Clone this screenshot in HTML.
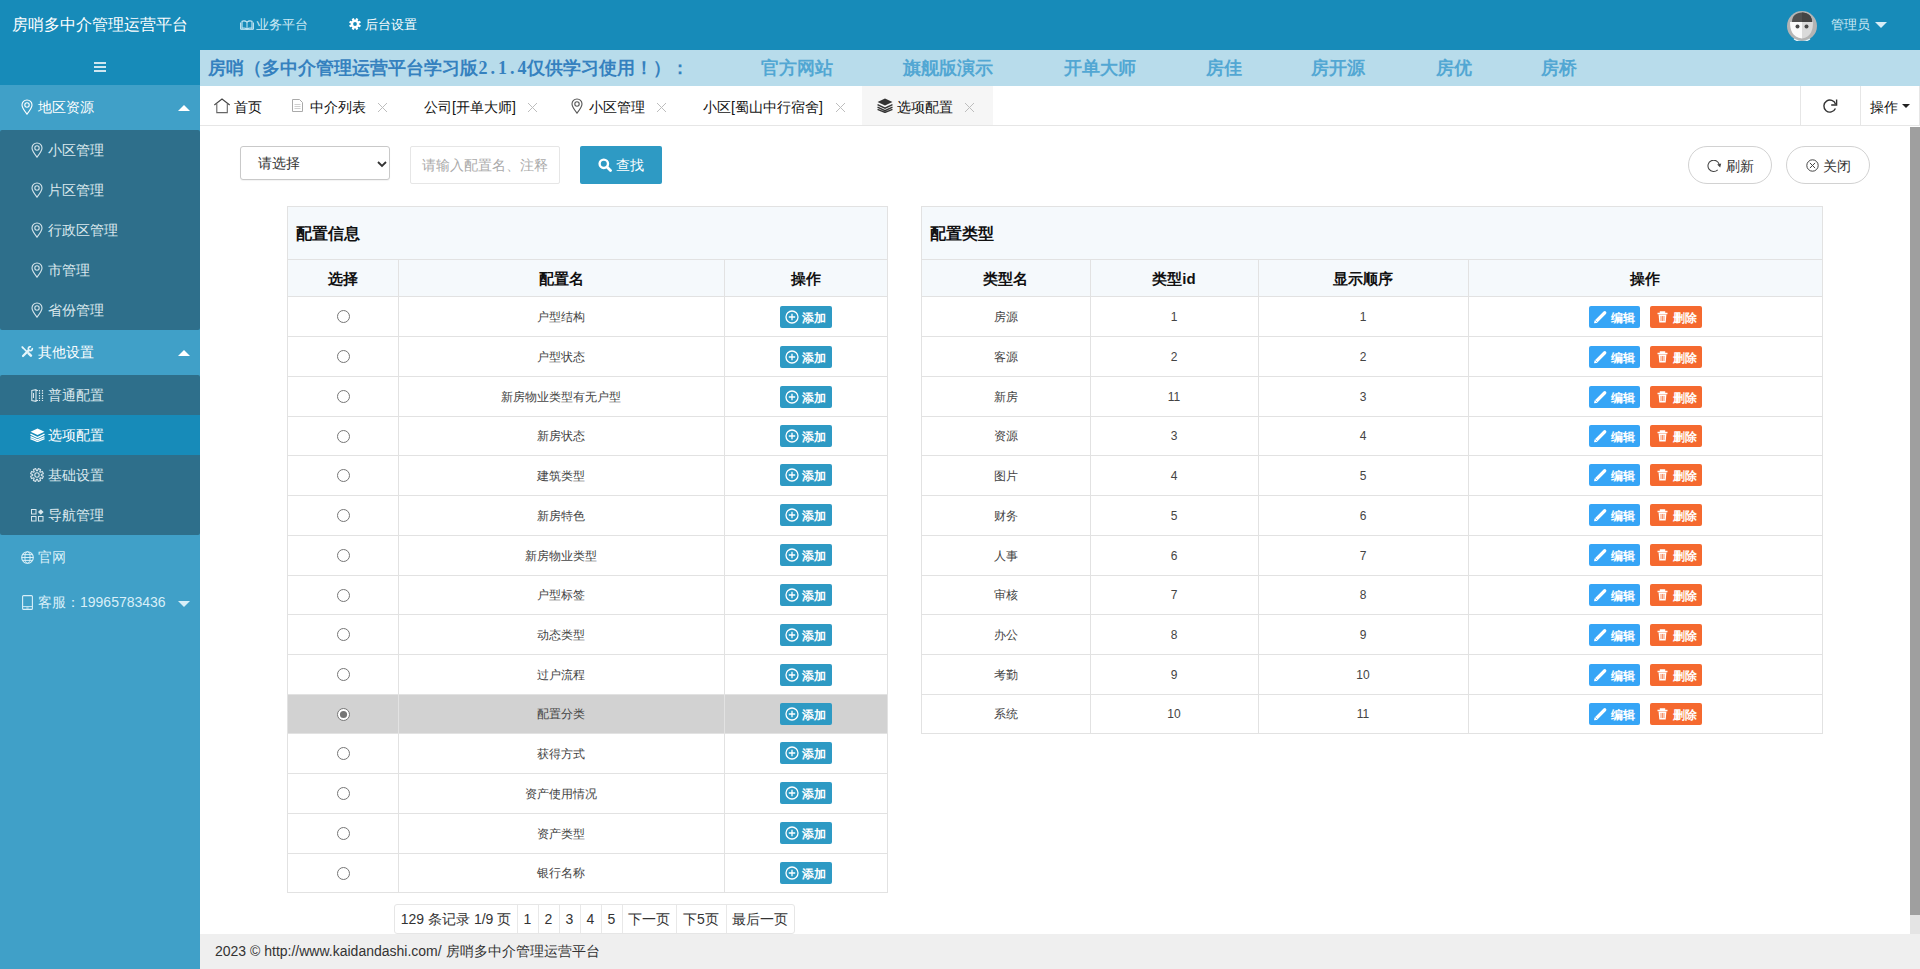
<!DOCTYPE html>
<html><head><meta charset="utf-8">
<style>
*{box-sizing:border-box;margin:0;padding:0}
html,body{width:1920px;height:969px;overflow:hidden;background:#fff;font-family:"Liberation Sans",sans-serif;color:#333}
.abs{position:absolute}
#hdr{position:absolute;left:0;top:0;width:1920px;height:50px;background:#178bb9}
#logo{position:absolute;left:12px;top:0;line-height:50px;font-size:16px;color:#fff;white-space:nowrap}
.hnav{position:absolute;top:0;line-height:50px;font-size:13px;color:#cdeaf5;white-space:nowrap}
#side{position:absolute;left:0;top:50px;width:200px;height:919px;background:#40a0c8}
#ham{position:absolute;left:0;top:0;width:200px;height:35px;background:#178bb9}
.m1{position:absolute;left:0;width:200px;height:45px;line-height:45px;font-size:14px;color:#fff;white-space:nowrap}
.m1 .tx{position:absolute;left:38px}
.sub{position:absolute;left:0;width:200px;background:#2e6f8b;border-radius:2px}
.m2{position:absolute;left:0;width:200px;height:40px;line-height:40px;font-size:14px;color:#dce9ee;white-space:nowrap}
.m2 .tx{position:absolute;left:48px}
.m2.on{background:#178bb9;color:#fff}
.ico{position:absolute}
.tri-up{position:absolute;width:0;height:0;border-left:6px solid transparent;border-right:6px solid transparent;border-bottom:6px solid #fff}
.tri-dn{position:absolute;width:0;height:0;border-left:6px solid transparent;border-right:6px solid transparent;border-top:6px solid #fff}
#banner{position:absolute;left:200px;top:50px;width:1720px;height:36px;background:#b8dceb;font-family:"Liberation Serif",serif;font-weight:bold;font-size:18px;line-height:36px;white-space:nowrap}
#banner span{position:absolute;top:0}
.hw{display:inline-block;width:9.8px;text-align:center}
#tabs{position:absolute;left:200px;top:86px;width:1720px;height:40px;background:#fff;border-bottom:1px solid #e6e6e6}
.tab{position:absolute;top:0;height:39px;line-height:42px;font-size:14px;color:#111;white-space:nowrap}
.tab span{position:absolute;top:0}
.cls{position:absolute;top:16px;width:11px;height:11px}
#main{position:absolute;left:0;top:0;width:1920px;height:969px}
.sel{position:absolute;border:1px solid #c9c9c9;border-radius:3px;background:#fff;font-size:14px;color:#333;box-shadow:0 1px 1px rgba(0,0,0,.05)}
.sel span,.inp span,.btnq span,.pill span,.badd span,.bed span,.bdel span{position:absolute;top:0;white-space:nowrap}
.sel span{line-height:32px}
.inp{position:absolute;border:1px solid #e6e6e6;border-radius:2px;background:#fff;font-size:14px;color:#aaa}
.inp span{line-height:36px}
.btnq{position:absolute;background:#2e9ac4;border-radius:2px;color:#fff;font-size:14px}
.btnq span{line-height:38px}
.pill{position:absolute;border:1px solid #d2d2d2;border-radius:19px;background:#fff;color:#333;font-size:14px}
.pill span{line-height:38px}
.pnl{position:absolute;border:1px solid #e2e2e2;background:#fff}
.phd{position:absolute;background:#f5f9fc}
.ptl{position:absolute;font-size:16px;font-weight:bold;line-height:53px;color:#111;white-space:nowrap}
.hl{position:absolute;height:1px;background:#e2e2e2}
.vl{position:absolute;width:1px;background:#e2e2e2}
.th{position:absolute;height:36px;line-height:37px;text-align:center;font-size:15px;font-weight:bold;color:#111}
.td{position:absolute;text-align:center;font-size:12px;color:#444;white-space:nowrap}
.badd,.bed,.bdel{position:absolute;width:52px;height:22px;border-radius:2px;color:#fff;font-size:12px;font-weight:bold}
.badd span,.bed span,.bdel span{line-height:24px}
.badd{background:#2e9ac4}
.bed{background:#36a5f6;width:51px}
.bdel{background:#f5692f}
.pg{position:absolute;height:28px;line-height:28px;text-align:center;font-size:14px;color:#333;white-space:nowrap}
#footer{position:absolute;left:200px;top:934px;width:1720px;height:35px;background:#efefef;line-height:34px;font-size:14px;color:#333;padding-left:15px;white-space:nowrap}
#sb{position:absolute;left:1910px;top:127px;width:10px;height:807px;background:#e4e4e4}
#sbt{position:absolute;left:1910px;top:127px;width:10px;height:788px;background:#9f9f9f}
</style></head><body>
<div id="hdr">
  <div id="logo">房哨多中介管理运营平台</div>
  <svg class="ico" style="left:240px;top:20px" width="14" height="10" viewBox="0 0 14 10"><path d="M2 1.3C3.6 0.6 5.5 0.8 7 2.2C8.5 0.8 10.4 0.6 12 1.3V8.3C10.4 7.7 8.5 7.9 7 9.2C5.5 7.9 3.6 7.7 2 8.3Z" fill="none" stroke="#cdeaf5" stroke-width="1.1"/><path d="M7 2.2V9M0.6 2.5V9.3H13.4V2.5" fill="none" stroke="#cdeaf5" stroke-width="1"/></svg>
  <div class="hnav" style="left:256px">业务平台</div>
  <svg class="ico" style="left:349px;top:18px" width="12" height="12" viewBox="0 0 12 12"><path d="M10.18 6.41L11.88 7.17L10.99 9.33L9.25 8.66L8.66 9.25L9.33 10.99L7.17 11.88L6.41 10.18L5.59 10.18L4.83 11.88L2.67 10.99L3.34 9.25L2.75 8.66L1.01 9.33L0.12 7.17L1.82 6.41L1.82 5.59L0.12 4.83L1.01 2.67L2.75 3.34L3.34 2.75L2.67 1.01L4.83 0.12L5.59 1.82L6.41 1.82L7.17 0.12L9.33 1.01L8.66 2.75L9.25 3.34L10.99 2.67L11.88 4.83L10.18 5.59Z" fill="#fff"/><circle cx="6" cy="6" r="1.9" fill="#178bb9"/></svg>
  <div class="hnav" style="left:365px;color:#fff">后台设置</div>
  <svg class="ico" style="left:1787px;top:11px" width="30" height="30" viewBox="0 0 30 30"><circle cx="15" cy="15" r="15" fill="#b4b4b4"/><path d="M3 11C3 19 5 26 15 27.5V11Z" fill="#fafafa"/><path d="M15 11H26C26 19 24 26 15 27.5Z" fill="#dadada"/><path d="M5 11C5 5 9 1.5 15 1.5C21 1.5 25 5 25 11Z" fill="#505050"/><path d="M15 1.5V11H25C25 5 21 1.5 15 1.5Z" fill="#444"/><circle cx="10.5" cy="15.5" r="2" fill="#4a4a4a"/><circle cx="19.5" cy="15.5" r="2" fill="#4a4a4a"/><path d="M7 28A15 15 0 0 0 23 28" stroke="#e8f4f8" stroke-width="1.2" fill="none"/></svg>
  <div class="hnav" style="left:1831px">管理员</div>
  <div class="tri-dn" style="left:1875px;top:22px;border-top-color:#d8eef7"></div>
</div>
<div id="side">
  <div id="ham"><svg class="ico" style="left:94px;top:11px" width="12" height="12" viewBox="0 0 12 12"><rect x="0" y="1" width="12" height="2" fill="#cfe6f0"/><rect x="0" y="5" width="12" height="2" fill="#cfe6f0"/><rect x="0" y="9" width="12" height="2" fill="#cfe6f0"/></svg></div>
  <div class="m1" style="top:35px"><svg class="ico" style="left:21px;top:14px" width="12" height="16" viewBox="0 0 12 16"><path d="M6 15.2C3.2 11.6 1 8.6 1 6A5 5 0 0 1 11 6C11 8.6 8.8 11.6 6 15.2Z" fill="none" stroke="#fff" stroke-width="1.1"/><circle cx="6" cy="6" r="2.2" fill="none" stroke="#fff" stroke-width="1.1"/></svg><span class="tx">地区资源</span><div class="tri-up" style="left:178px;top:20px"></div></div>
  <div class="sub" style="top:80px;height:200px">
    <div class="m2" style="top:0"><svg class="ico" style="left:31px;top:12px" width="12" height="16" viewBox="0 0 12 16"><path d="M6 15.2C3.2 11.6 1 8.6 1 6A5 5 0 0 1 11 6C11 8.6 8.8 11.6 6 15.2Z" fill="none" stroke="#d8e6ec" stroke-width="1.1"/><circle cx="6" cy="6" r="2.2" fill="none" stroke="#d8e6ec" stroke-width="1.1"/></svg><span class="tx">小区管理</span></div>
    <div class="m2" style="top:40px"><svg class="ico" style="left:31px;top:12px" width="12" height="16" viewBox="0 0 12 16"><path d="M6 15.2C3.2 11.6 1 8.6 1 6A5 5 0 0 1 11 6C11 8.6 8.8 11.6 6 15.2Z" fill="none" stroke="#d8e6ec" stroke-width="1.1"/><circle cx="6" cy="6" r="2.2" fill="none" stroke="#d8e6ec" stroke-width="1.1"/></svg><span class="tx">片区管理</span></div>
    <div class="m2" style="top:80px"><svg class="ico" style="left:31px;top:12px" width="12" height="16" viewBox="0 0 12 16"><path d="M6 15.2C3.2 11.6 1 8.6 1 6A5 5 0 0 1 11 6C11 8.6 8.8 11.6 6 15.2Z" fill="none" stroke="#d8e6ec" stroke-width="1.1"/><circle cx="6" cy="6" r="2.2" fill="none" stroke="#d8e6ec" stroke-width="1.1"/></svg><span class="tx">行政区管理</span></div>
    <div class="m2" style="top:120px"><svg class="ico" style="left:31px;top:12px" width="12" height="16" viewBox="0 0 12 16"><path d="M6 15.2C3.2 11.6 1 8.6 1 6A5 5 0 0 1 11 6C11 8.6 8.8 11.6 6 15.2Z" fill="none" stroke="#d8e6ec" stroke-width="1.1"/><circle cx="6" cy="6" r="2.2" fill="none" stroke="#d8e6ec" stroke-width="1.1"/></svg><span class="tx">市管理</span></div>
    <div class="m2" style="top:160px"><svg class="ico" style="left:31px;top:12px" width="12" height="16" viewBox="0 0 12 16"><path d="M6 15.2C3.2 11.6 1 8.6 1 6A5 5 0 0 1 11 6C11 8.6 8.8 11.6 6 15.2Z" fill="none" stroke="#d8e6ec" stroke-width="1.1"/><circle cx="6" cy="6" r="2.2" fill="none" stroke="#d8e6ec" stroke-width="1.1"/></svg><span class="tx">省份管理</span></div>
  </div>
  <div class="m1" style="top:280px"><svg class="ico" style="left:21px;top:16px" width="13" height="12" viewBox="0 0 13 12"><path d="M1.3 1.1L5.6 5.4" stroke="#e6f6fb" stroke-width="1.5" stroke-linecap="round"/><path d="M0.6 0.5L2.9 1L1.1 2.8Z" fill="#e6f6fb"/><path d="M7.6 7.4L9.9 9.7" stroke="#e6f6fb" stroke-width="2.6" stroke-linecap="round"/><path d="M2 10L7.6 4.4" stroke="#e6f6fb" stroke-width="2.2" stroke-linecap="round"/><path d="M11.2 2A2 2 0 1 1 10 0.8" fill="none" stroke="#e6f6fb" stroke-width="1.6"/></svg><span class="tx">其他设置</span><div class="tri-up" style="left:178px;top:20px"></div></div>
  <div class="sub" style="top:325px;height:160px">
    <div class="m2" style="top:0"><svg class="ico" style="left:31px;top:14px" width="13" height="13" viewBox="0 0 13 13"><path d="M0.8 1.5L5 0.6V12.4L0.8 11.5Z" fill="none" stroke="#d8e6ec" stroke-width="1.1"/><path d="M5 1.5H7M5 11.5H7M2.5 4V9" stroke="#d8e6ec" stroke-width="1"/><path d="M8.5 1V12M11.5 1V12" stroke="#d8e6ec" stroke-width="1.2" stroke-dasharray="1.5 1"/></svg><span class="tx">普通配置</span></div>
    <div class="m2 on" style="top:40px"><svg class="ico" style="left:30px;top:13px" width="15" height="14" viewBox="0 0 15 14"><path d="M7.5 0.5L14.5 3.8L7.5 7.1L0.5 3.8Z" fill="#fff"/><path d="M0.5 6.2L7.5 9.5L14.5 6.2M0.5 8.6L7.5 11.9L14.5 8.6M0.5 10.6L7.5 13.5L14.5 10.6" fill="none" stroke="#fff" stroke-width="1.3"/></svg><span class="tx">选项配置</span></div>
    <div class="m2" style="top:80px"><svg class="ico" style="left:30px;top:13px" width="14" height="14" viewBox="0 0 14 14"><path d="M11.28 7.42L13.38 8.27L12.40 10.61L10.32 9.73L9.73 10.32L10.61 12.40L8.27 13.38L7.42 11.28L6.58 11.28L5.73 13.38L3.39 12.40L4.27 10.32L3.68 9.73L1.60 10.61L0.62 8.27L2.72 7.42L2.72 6.58L0.62 5.73L1.60 3.39L3.68 4.27L4.27 3.68L3.39 1.60L5.73 0.62L6.58 2.72L7.42 2.72L8.27 0.62L10.61 1.60L9.73 3.68L10.32 4.27L12.40 3.39L13.38 5.73L11.28 6.58Z" fill="none" stroke="#d8e6ec" stroke-width="1.1" stroke-linejoin="round"/><circle cx="7" cy="7" r="2.2" fill="none" stroke="#d8e6ec" stroke-width="1.1"/></svg><span class="tx">基础设置</span></div>
    <div class="m2" style="top:120px"><svg class="ico" style="left:31px;top:14px" width="13" height="13" viewBox="0 0 13 13"><rect x="0.5" y="0.5" width="4.5" height="4.5" fill="none" stroke="#d8e6ec"/><rect x="0.5" y="7.5" width="4.5" height="4.5" fill="none" stroke="#d8e6ec"/><rect x="7.5" y="7.5" width="4.5" height="4.5" fill="none" stroke="#d8e6ec"/><path d="M9.8 0.2L12.6 3L9.8 5.8L7 3Z" fill="#d8e6ec"/></svg><span class="tx">导航管理</span></div>
  </div>
  <div class="m1" style="top:485px;color:#d8eff8"><svg class="ico" style="left:21px;top:16px" width="13" height="13" viewBox="0 0 13 13"><circle cx="6.5" cy="6.5" r="5.8" fill="none" stroke="#d8eff8" stroke-width="1.1"/><ellipse cx="6.5" cy="6.5" rx="2.6" ry="5.8" fill="none" stroke="#d8eff8" stroke-width="1"/><path d="M0.7 6.5H12.3M1.5 3.6H11.5M1.5 9.4H11.5" stroke="#d8eff8" stroke-width="1"/></svg><span class="tx">官网</span></div>
  <div class="m1" style="top:530px;color:#d8eff8"><svg class="ico" style="left:22px;top:15px" width="11" height="15" viewBox="0 0 11 15"><rect x="0.6" y="0.6" width="9.8" height="13.8" rx="1" fill="none" stroke="#d8eff8" stroke-width="1.1"/><path d="M0.6 11.6H10.4M4.3 13H6.7" stroke="#d8eff8" stroke-width="0.9"/></svg><span class="tx">客服：19965783436</span><div class="tri-dn" style="left:178px;top:21px;border-top-color:#d8eff8"></div></div>
</div>
<div id="banner">
  <span style="left:8px;color:#3581bf">房哨（多中介管理运营平台学习版<b class="hw">2</b><b class="hw">.</b><b class="hw">1</b><b class="hw">.</b><b class="hw">4</b>仅供学习使用！）：</span>
  <span style="left:561px;color:#52a7d3">官方网站</span>
  <span style="left:703px;color:#52a7d3">旗舰版演示</span>
  <span style="left:864px;color:#52a7d3">开单大师</span>
  <span style="left:1006px;color:#52a7d3">房佳</span>
  <span style="left:1111px;color:#52a7d3">房开源</span>
  <span style="left:1236px;color:#52a7d3">房优</span>
  <span style="left:1341px;color:#52a7d3">房桥</span>
</div>
<div id="tabs">
  <svg class="ico" style="left:14px;top:12px" width="17" height="16" viewBox="0 0 17 16"><path d="M0.3 7L8 1L15.7 7" fill="none" stroke="#444" stroke-width="1.1"/><path d="M2.8 5.6V14.6H13.3V5.6" fill="none" stroke="#666" stroke-width="1.1"/></svg>
  <div class="tab" style="left:34px"><span style="left:0">首页</span></div>
  <svg class="ico" style="left:92px;top:13px" width="11" height="13" viewBox="0 0 11 13"><path d="M0.5 0.5H7.5L10.5 3.5V12.5H0.5Z" fill="none" stroke="#aaa" stroke-width="1"/><path d="M2.5 5.5H8.5M2.5 7.5H8.5M2.5 9.5H8.5" stroke="#bbb" stroke-width="0.7"/></svg>
  <div class="tab" style="left:110px"><span style="left:0">中介列表</span></div><svg class="cls" style="left:177px" width="11" height="11" viewBox="0 0 11 11"><path d="M1 1L10 10M10 1L1 10" stroke="#bdbdbd" stroke-width="1"/></svg>
  <div class="tab" style="left:224px"><span style="left:0">公司[开单大师]</span></div><svg class="cls" style="left:327px" width="11" height="11" viewBox="0 0 11 11"><path d="M1 1L10 10M10 1L1 10" stroke="#bdbdbd" stroke-width="1"/></svg>
  <svg class="ico" style="left:371px;top:12px" width="12" height="16" viewBox="0 0 12 16"><path d="M6 15.2C3.2 11.6 1 8.6 1 6A5 5 0 0 1 11 6C11 8.6 8.8 11.6 6 15.2Z" fill="none" stroke="#555" stroke-width="1.1"/><circle cx="6" cy="6" r="2.2" fill="none" stroke="#555" stroke-width="1.1"/></svg>
  <div class="tab" style="left:389px"><span style="left:0">小区管理</span></div><svg class="cls" style="left:456px" width="11" height="11" viewBox="0 0 11 11"><path d="M1 1L10 10M10 1L1 10" stroke="#bdbdbd" stroke-width="1"/></svg>
  <div class="tab" style="left:503px"><span style="left:0">小区[蜀山中行宿舍]</span></div><svg class="cls" style="left:635px" width="11" height="11" viewBox="0 0 11 11"><path d="M1 1L10 10M10 1L1 10" stroke="#bdbdbd" stroke-width="1"/></svg>
  <div style="position:absolute;left:662px;top:0;width:131px;height:39px;background:#f6f6f6"></div>
  <svg class="ico" style="left:677px;top:12px" width="16" height="15" viewBox="0 0 15 14"><path d="M7.5 0.5L14.5 3.8L7.5 7.1L0.5 3.8Z" fill="#333"/><path d="M0.5 6.2L7.5 9.5L14.5 6.2M0.5 8.6L7.5 11.9L14.5 8.6M0.5 10.6L7.5 13.5L14.5 10.6" fill="none" stroke="#333" stroke-width="1.3"/></svg>
  <div class="tab" style="left:697px"><span style="left:0">选项配置</span></div><svg class="cls" style="left:764px" width="11" height="11" viewBox="0 0 11 11"><path d="M1 1L10 10M10 1L1 10" stroke="#bdbdbd" stroke-width="1"/></svg>
  <div style="position:absolute;left:1600px;top:0;width:1px;height:40px;background:#e6e6e6"></div>
  <svg class="ico" style="left:1622px;top:12px" width="16" height="16" viewBox="0 0 16 16"><path d="M13.6 6.2A6 6 0 1 0 13.4 10.5" fill="none" stroke="#333" stroke-width="1.4"/><path d="M14.6 1.6V7H9.2" fill="none" stroke="#333" stroke-width="1.4"/></svg>
  <div style="position:absolute;left:1660px;top:0;width:1px;height:40px;background:#e6e6e6"></div>
  <div class="tab" style="left:1670px"><span style="left:0">操作</span></div>
  <div style="position:absolute;left:1719px;top:0;width:1px;height:40px;background:#e6e6e6"></div>
  <div class="tri-dn" style="left:1702px;top:18px;border-top-color:#222;border-left-width:4px;border-right-width:4px;border-top-width:4px"></div>
</div>
<!--MAIN--><div id="main">
<div class="sel" style="left:240px;top:146px;width:150px;height:34px"><span style="left:17px">请选择</span><svg class="ico" style="left:136px;top:14px" width="10" height="7" viewBox="0 0 10 7"><path d="M1 1L5 5L9 1" fill="none" stroke="#333" stroke-width="1.8"/></svg></div>
<div class="inp" style="left:410px;top:146px;width:150px;height:38px"><span style="left:11px">请输入配置名、注释</span></div>
<div class="btnq" style="left:580px;top:146px;width:82px;height:38px"><svg class="ico" style="left:18px;top:12px" width="14" height="14" viewBox="0 0 14 14"><circle cx="5.8" cy="5.8" r="4.2" fill="none" stroke="#fff" stroke-width="2.4"/><path d="M9 9L12.5 12.5" stroke="#fff" stroke-width="2.8" stroke-linecap="round"/></svg><span style="left:36px">查找</span></div>
<div class="pill" style="left:1688px;top:146px;width:84px;height:38px"><svg class="ico" style="left:18px;top:13px" width="15" height="14" viewBox="0 0 15 14"><path d="M10.7 9.9A5.7 5.7 0 1 1 12.2 4.4" fill="none" stroke="#444" stroke-width="1.05"/><path d="M10.2 4.6L14.2 3.6L13.2 7.4Z" fill="#444"/></svg><span style="left:37px">刷新</span></div>
<div class="pill" style="left:1786px;top:146px;width:84px;height:38px"><svg class="ico" style="left:19px;top:12px" width="13" height="13" viewBox="0 0 13 13"><circle cx="6.5" cy="6.5" r="5.7" fill="none" stroke="#444" stroke-width="1"/><path d="M3.9 3.9L9.1 9.1M9.1 3.9L3.9 9.1" stroke="#444" stroke-width="1"/></svg><span style="left:36px">关闭</span></div>
<div class="pnl" style="left:287px;top:206px;width:601px;height:687px"></div>
<div class="phd" style="left:288px;top:207px;width:599px;height:89px"></div>
<div class="ptl" style="left:296px;top:207px">配置信息</div>
<div class="hl" style="left:287px;top:259px;width:601px"></div>
<div class="hl" style="left:287px;top:296px;width:601px"></div>
<div class="hl" style="left:287px;top:336px;width:601px"></div>
<div class="hl" style="left:287px;top:376px;width:601px"></div>
<div class="hl" style="left:287px;top:416px;width:601px"></div>
<div class="hl" style="left:287px;top:455px;width:601px"></div>
<div class="hl" style="left:287px;top:495px;width:601px"></div>
<div class="hl" style="left:287px;top:535px;width:601px"></div>
<div class="hl" style="left:287px;top:575px;width:601px"></div>
<div class="hl" style="left:287px;top:614px;width:601px"></div>
<div class="hl" style="left:287px;top:654px;width:601px"></div>
<div class="hl" style="left:287px;top:694px;width:601px"></div>
<div class="hl" style="left:287px;top:733px;width:601px"></div>
<div class="hl" style="left:287px;top:773px;width:601px"></div>
<div class="hl" style="left:287px;top:813px;width:601px"></div>
<div class="hl" style="left:287px;top:853px;width:601px"></div>
<div class="vl" style="left:398px;top:259px;height:633px"></div>
<div class="vl" style="left:724px;top:259px;height:633px"></div>
<div class="th" style="left:287px;top:260px;width:111px">选择</div>
<div class="th" style="left:398px;top:260px;width:326px">配置名</div>
<div class="th" style="left:724px;top:260px;width:163px">操作</div>
<svg class="ico" style="left:337px;top:310.0px" width="13" height="13" viewBox="0 0 13 13"><circle cx="6.5" cy="6.5" r="6" fill="#fff" stroke="#767676" stroke-width="1"/></svg>
<div class="td" style="left:398px;top:296px;width:326px;height:40px;line-height:42px">户型结构</div>
<div class="badd" style="left:780px;top:306px"><svg class="ico" style="left:5px;top:4px" width="14" height="14" viewBox="0 0 14 14"><circle cx="7" cy="7" r="6" fill="none" stroke="#fff" stroke-width="1.3"/><path d="M7 3.8V10.2M3.8 7H10.2" stroke="#fff" stroke-width="1.3"/></svg><span style="left:22px">添加</span></div>
<svg class="ico" style="left:337px;top:350.0px" width="13" height="13" viewBox="0 0 13 13"><circle cx="6.5" cy="6.5" r="6" fill="#fff" stroke="#767676" stroke-width="1"/></svg>
<div class="td" style="left:398px;top:336px;width:326px;height:40px;line-height:42px">户型状态</div>
<div class="badd" style="left:780px;top:346px"><svg class="ico" style="left:5px;top:4px" width="14" height="14" viewBox="0 0 14 14"><circle cx="7" cy="7" r="6" fill="none" stroke="#fff" stroke-width="1.3"/><path d="M7 3.8V10.2M3.8 7H10.2" stroke="#fff" stroke-width="1.3"/></svg><span style="left:22px">添加</span></div>
<svg class="ico" style="left:337px;top:390.0px" width="13" height="13" viewBox="0 0 13 13"><circle cx="6.5" cy="6.5" r="6" fill="#fff" stroke="#767676" stroke-width="1"/></svg>
<div class="td" style="left:398px;top:376px;width:326px;height:40px;line-height:42px">新房物业类型有无户型</div>
<div class="badd" style="left:780px;top:386px"><svg class="ico" style="left:5px;top:4px" width="14" height="14" viewBox="0 0 14 14"><circle cx="7" cy="7" r="6" fill="none" stroke="#fff" stroke-width="1.3"/><path d="M7 3.8V10.2M3.8 7H10.2" stroke="#fff" stroke-width="1.3"/></svg><span style="left:22px">添加</span></div>
<svg class="ico" style="left:337px;top:429.5px" width="13" height="13" viewBox="0 0 13 13"><circle cx="6.5" cy="6.5" r="6" fill="#fff" stroke="#767676" stroke-width="1"/></svg>
<div class="td" style="left:398px;top:416px;width:326px;height:39px;line-height:41px">新房状态</div>
<div class="badd" style="left:780px;top:425px"><svg class="ico" style="left:5px;top:4px" width="14" height="14" viewBox="0 0 14 14"><circle cx="7" cy="7" r="6" fill="none" stroke="#fff" stroke-width="1.3"/><path d="M7 3.8V10.2M3.8 7H10.2" stroke="#fff" stroke-width="1.3"/></svg><span style="left:22px">添加</span></div>
<svg class="ico" style="left:337px;top:469.0px" width="13" height="13" viewBox="0 0 13 13"><circle cx="6.5" cy="6.5" r="6" fill="#fff" stroke="#767676" stroke-width="1"/></svg>
<div class="td" style="left:398px;top:455px;width:326px;height:40px;line-height:42px">建筑类型</div>
<div class="badd" style="left:780px;top:464px"><svg class="ico" style="left:5px;top:4px" width="14" height="14" viewBox="0 0 14 14"><circle cx="7" cy="7" r="6" fill="none" stroke="#fff" stroke-width="1.3"/><path d="M7 3.8V10.2M3.8 7H10.2" stroke="#fff" stroke-width="1.3"/></svg><span style="left:22px">添加</span></div>
<svg class="ico" style="left:337px;top:509.0px" width="13" height="13" viewBox="0 0 13 13"><circle cx="6.5" cy="6.5" r="6" fill="#fff" stroke="#767676" stroke-width="1"/></svg>
<div class="td" style="left:398px;top:495px;width:326px;height:40px;line-height:42px">新房特色</div>
<div class="badd" style="left:780px;top:504px"><svg class="ico" style="left:5px;top:4px" width="14" height="14" viewBox="0 0 14 14"><circle cx="7" cy="7" r="6" fill="none" stroke="#fff" stroke-width="1.3"/><path d="M7 3.8V10.2M3.8 7H10.2" stroke="#fff" stroke-width="1.3"/></svg><span style="left:22px">添加</span></div>
<svg class="ico" style="left:337px;top:549.0px" width="13" height="13" viewBox="0 0 13 13"><circle cx="6.5" cy="6.5" r="6" fill="#fff" stroke="#767676" stroke-width="1"/></svg>
<div class="td" style="left:398px;top:535px;width:326px;height:40px;line-height:42px">新房物业类型</div>
<div class="badd" style="left:780px;top:544px"><svg class="ico" style="left:5px;top:4px" width="14" height="14" viewBox="0 0 14 14"><circle cx="7" cy="7" r="6" fill="none" stroke="#fff" stroke-width="1.3"/><path d="M7 3.8V10.2M3.8 7H10.2" stroke="#fff" stroke-width="1.3"/></svg><span style="left:22px">添加</span></div>
<svg class="ico" style="left:337px;top:588.5px" width="13" height="13" viewBox="0 0 13 13"><circle cx="6.5" cy="6.5" r="6" fill="#fff" stroke="#767676" stroke-width="1"/></svg>
<div class="td" style="left:398px;top:575px;width:326px;height:39px;line-height:41px">户型标签</div>
<div class="badd" style="left:780px;top:584px"><svg class="ico" style="left:5px;top:4px" width="14" height="14" viewBox="0 0 14 14"><circle cx="7" cy="7" r="6" fill="none" stroke="#fff" stroke-width="1.3"/><path d="M7 3.8V10.2M3.8 7H10.2" stroke="#fff" stroke-width="1.3"/></svg><span style="left:22px">添加</span></div>
<svg class="ico" style="left:337px;top:628.0px" width="13" height="13" viewBox="0 0 13 13"><circle cx="6.5" cy="6.5" r="6" fill="#fff" stroke="#767676" stroke-width="1"/></svg>
<div class="td" style="left:398px;top:614px;width:326px;height:40px;line-height:42px">动态类型</div>
<div class="badd" style="left:780px;top:624px"><svg class="ico" style="left:5px;top:4px" width="14" height="14" viewBox="0 0 14 14"><circle cx="7" cy="7" r="6" fill="none" stroke="#fff" stroke-width="1.3"/><path d="M7 3.8V10.2M3.8 7H10.2" stroke="#fff" stroke-width="1.3"/></svg><span style="left:22px">添加</span></div>
<svg class="ico" style="left:337px;top:668.0px" width="13" height="13" viewBox="0 0 13 13"><circle cx="6.5" cy="6.5" r="6" fill="#fff" stroke="#767676" stroke-width="1"/></svg>
<div class="td" style="left:398px;top:654px;width:326px;height:40px;line-height:42px">过户流程</div>
<div class="badd" style="left:780px;top:664px"><svg class="ico" style="left:5px;top:4px" width="14" height="14" viewBox="0 0 14 14"><circle cx="7" cy="7" r="6" fill="none" stroke="#fff" stroke-width="1.3"/><path d="M7 3.8V10.2M3.8 7H10.2" stroke="#fff" stroke-width="1.3"/></svg><span style="left:22px">添加</span></div>
<div style="position:absolute;left:288px;top:695px;width:599px;height:38px;background:#d2d2d2"></div>
<div class="vl" style="left:398px;top:694px;height:39px"></div>
<div class="vl" style="left:724px;top:694px;height:39px"></div>
<svg class="ico" style="left:337px;top:707.5px" width="13" height="13" viewBox="0 0 13 13"><circle cx="6.5" cy="6.5" r="6" fill="#fff" stroke="#767676" stroke-width="1"/><circle cx="6.5" cy="6.5" r="3.6" fill="#767676"/></svg>
<div class="td" style="left:398px;top:694px;width:326px;height:39px;line-height:41px">配置分类</div>
<div class="badd" style="left:780px;top:703px"><svg class="ico" style="left:5px;top:4px" width="14" height="14" viewBox="0 0 14 14"><circle cx="7" cy="7" r="6" fill="none" stroke="#fff" stroke-width="1.3"/><path d="M7 3.8V10.2M3.8 7H10.2" stroke="#fff" stroke-width="1.3"/></svg><span style="left:22px">添加</span></div>
<svg class="ico" style="left:337px;top:747.0px" width="13" height="13" viewBox="0 0 13 13"><circle cx="6.5" cy="6.5" r="6" fill="#fff" stroke="#767676" stroke-width="1"/></svg>
<div class="td" style="left:398px;top:733px;width:326px;height:40px;line-height:42px">获得方式</div>
<div class="badd" style="left:780px;top:742px"><svg class="ico" style="left:5px;top:4px" width="14" height="14" viewBox="0 0 14 14"><circle cx="7" cy="7" r="6" fill="none" stroke="#fff" stroke-width="1.3"/><path d="M7 3.8V10.2M3.8 7H10.2" stroke="#fff" stroke-width="1.3"/></svg><span style="left:22px">添加</span></div>
<svg class="ico" style="left:337px;top:787.0px" width="13" height="13" viewBox="0 0 13 13"><circle cx="6.5" cy="6.5" r="6" fill="#fff" stroke="#767676" stroke-width="1"/></svg>
<div class="td" style="left:398px;top:773px;width:326px;height:40px;line-height:42px">资产使用情况</div>
<div class="badd" style="left:780px;top:782px"><svg class="ico" style="left:5px;top:4px" width="14" height="14" viewBox="0 0 14 14"><circle cx="7" cy="7" r="6" fill="none" stroke="#fff" stroke-width="1.3"/><path d="M7 3.8V10.2M3.8 7H10.2" stroke="#fff" stroke-width="1.3"/></svg><span style="left:22px">添加</span></div>
<svg class="ico" style="left:337px;top:827.0px" width="13" height="13" viewBox="0 0 13 13"><circle cx="6.5" cy="6.5" r="6" fill="#fff" stroke="#767676" stroke-width="1"/></svg>
<div class="td" style="left:398px;top:813px;width:326px;height:40px;line-height:42px">资产类型</div>
<div class="badd" style="left:780px;top:822px"><svg class="ico" style="left:5px;top:4px" width="14" height="14" viewBox="0 0 14 14"><circle cx="7" cy="7" r="6" fill="none" stroke="#fff" stroke-width="1.3"/><path d="M7 3.8V10.2M3.8 7H10.2" stroke="#fff" stroke-width="1.3"/></svg><span style="left:22px">添加</span></div>
<svg class="ico" style="left:337px;top:866.5px" width="13" height="13" viewBox="0 0 13 13"><circle cx="6.5" cy="6.5" r="6" fill="#fff" stroke="#767676" stroke-width="1"/></svg>
<div class="td" style="left:398px;top:853px;width:326px;height:39px;line-height:41px">银行名称</div>
<div class="badd" style="left:780px;top:862px"><svg class="ico" style="left:5px;top:4px" width="14" height="14" viewBox="0 0 14 14"><circle cx="7" cy="7" r="6" fill="none" stroke="#fff" stroke-width="1.3"/><path d="M7 3.8V10.2M3.8 7H10.2" stroke="#fff" stroke-width="1.3"/></svg><span style="left:22px">添加</span></div>
<div class="pnl" style="left:921px;top:206px;width:902px;height:528px"></div>
<div class="phd" style="left:922px;top:207px;width:900px;height:89px"></div>
<div class="ptl" style="left:930px;top:207px">配置类型</div>
<div class="hl" style="left:921px;top:259px;width:902px"></div>
<div class="hl" style="left:921px;top:296px;width:902px"></div>
<div class="hl" style="left:921px;top:336px;width:902px"></div>
<div class="hl" style="left:921px;top:376px;width:902px"></div>
<div class="hl" style="left:921px;top:416px;width:902px"></div>
<div class="hl" style="left:921px;top:455px;width:902px"></div>
<div class="hl" style="left:921px;top:495px;width:902px"></div>
<div class="hl" style="left:921px;top:535px;width:902px"></div>
<div class="hl" style="left:921px;top:575px;width:902px"></div>
<div class="hl" style="left:921px;top:614px;width:902px"></div>
<div class="hl" style="left:921px;top:654px;width:902px"></div>
<div class="hl" style="left:921px;top:694px;width:902px"></div>
<div class="vl" style="left:1090px;top:259px;height:474px"></div>
<div class="vl" style="left:1258px;top:259px;height:474px"></div>
<div class="vl" style="left:1468px;top:259px;height:474px"></div>
<div class="th" style="left:921px;top:260px;width:169px">类型名</div>
<div class="th" style="left:1090px;top:260px;width:168px">类型id</div>
<div class="th" style="left:1258px;top:260px;width:210px">显示顺序</div>
<div class="th" style="left:1468px;top:260px;width:354px">操作</div>
<div class="td" style="left:921px;top:296px;width:169px;height:40px;line-height:42px">房源</div>
<div class="td" style="left:1090px;top:296px;width:168px;height:40px;line-height:42px">1</div>
<div class="td" style="left:1258px;top:296px;width:210px;height:40px;line-height:42px">1</div>
<div class="bed" style="left:1589px;top:306px"><svg class="ico" style="left:4px;top:4px" width="15" height="14" viewBox="0 0 15 14"><path d="M1 13.3L1.6 10.6L10.6 1.6A1.5 1.5 0 0 1 12.9 3.9L3.9 12.9Z" fill="#fff"/><path d="M2.3 10.3L4.2 12.2" stroke="#36a5f6" stroke-width="0.6"/></svg><span style="left:22px">编辑</span></div>
<div class="bdel" style="left:1650px;top:306px"><svg class="ico" style="left:7px;top:5px" width="11" height="12" viewBox="0 0 11 12"><path d="M0.5 2.5H10.5M3.5 2.5V1H7.5V2.5" fill="none" stroke="#fff" stroke-width="1.4"/><path d="M1.6 3.5H9.4L8.7 11.5H2.3Z" fill="#fff"/><path d="M4 5V10M5.5 5V10M7 5V10" stroke="#f5692f" stroke-width="0.7"/></svg><span style="left:23px">删除</span></div>
<div class="td" style="left:921px;top:336px;width:169px;height:40px;line-height:42px">客源</div>
<div class="td" style="left:1090px;top:336px;width:168px;height:40px;line-height:42px">2</div>
<div class="td" style="left:1258px;top:336px;width:210px;height:40px;line-height:42px">2</div>
<div class="bed" style="left:1589px;top:346px"><svg class="ico" style="left:4px;top:4px" width="15" height="14" viewBox="0 0 15 14"><path d="M1 13.3L1.6 10.6L10.6 1.6A1.5 1.5 0 0 1 12.9 3.9L3.9 12.9Z" fill="#fff"/><path d="M2.3 10.3L4.2 12.2" stroke="#36a5f6" stroke-width="0.6"/></svg><span style="left:22px">编辑</span></div>
<div class="bdel" style="left:1650px;top:346px"><svg class="ico" style="left:7px;top:5px" width="11" height="12" viewBox="0 0 11 12"><path d="M0.5 2.5H10.5M3.5 2.5V1H7.5V2.5" fill="none" stroke="#fff" stroke-width="1.4"/><path d="M1.6 3.5H9.4L8.7 11.5H2.3Z" fill="#fff"/><path d="M4 5V10M5.5 5V10M7 5V10" stroke="#f5692f" stroke-width="0.7"/></svg><span style="left:23px">删除</span></div>
<div class="td" style="left:921px;top:376px;width:169px;height:40px;line-height:42px">新房</div>
<div class="td" style="left:1090px;top:376px;width:168px;height:40px;line-height:42px">11</div>
<div class="td" style="left:1258px;top:376px;width:210px;height:40px;line-height:42px">3</div>
<div class="bed" style="left:1589px;top:386px"><svg class="ico" style="left:4px;top:4px" width="15" height="14" viewBox="0 0 15 14"><path d="M1 13.3L1.6 10.6L10.6 1.6A1.5 1.5 0 0 1 12.9 3.9L3.9 12.9Z" fill="#fff"/><path d="M2.3 10.3L4.2 12.2" stroke="#36a5f6" stroke-width="0.6"/></svg><span style="left:22px">编辑</span></div>
<div class="bdel" style="left:1650px;top:386px"><svg class="ico" style="left:7px;top:5px" width="11" height="12" viewBox="0 0 11 12"><path d="M0.5 2.5H10.5M3.5 2.5V1H7.5V2.5" fill="none" stroke="#fff" stroke-width="1.4"/><path d="M1.6 3.5H9.4L8.7 11.5H2.3Z" fill="#fff"/><path d="M4 5V10M5.5 5V10M7 5V10" stroke="#f5692f" stroke-width="0.7"/></svg><span style="left:23px">删除</span></div>
<div class="td" style="left:921px;top:416px;width:169px;height:39px;line-height:41px">资源</div>
<div class="td" style="left:1090px;top:416px;width:168px;height:39px;line-height:41px">3</div>
<div class="td" style="left:1258px;top:416px;width:210px;height:39px;line-height:41px">4</div>
<div class="bed" style="left:1589px;top:425px"><svg class="ico" style="left:4px;top:4px" width="15" height="14" viewBox="0 0 15 14"><path d="M1 13.3L1.6 10.6L10.6 1.6A1.5 1.5 0 0 1 12.9 3.9L3.9 12.9Z" fill="#fff"/><path d="M2.3 10.3L4.2 12.2" stroke="#36a5f6" stroke-width="0.6"/></svg><span style="left:22px">编辑</span></div>
<div class="bdel" style="left:1650px;top:425px"><svg class="ico" style="left:7px;top:5px" width="11" height="12" viewBox="0 0 11 12"><path d="M0.5 2.5H10.5M3.5 2.5V1H7.5V2.5" fill="none" stroke="#fff" stroke-width="1.4"/><path d="M1.6 3.5H9.4L8.7 11.5H2.3Z" fill="#fff"/><path d="M4 5V10M5.5 5V10M7 5V10" stroke="#f5692f" stroke-width="0.7"/></svg><span style="left:23px">删除</span></div>
<div class="td" style="left:921px;top:455px;width:169px;height:40px;line-height:42px">图片</div>
<div class="td" style="left:1090px;top:455px;width:168px;height:40px;line-height:42px">4</div>
<div class="td" style="left:1258px;top:455px;width:210px;height:40px;line-height:42px">5</div>
<div class="bed" style="left:1589px;top:464px"><svg class="ico" style="left:4px;top:4px" width="15" height="14" viewBox="0 0 15 14"><path d="M1 13.3L1.6 10.6L10.6 1.6A1.5 1.5 0 0 1 12.9 3.9L3.9 12.9Z" fill="#fff"/><path d="M2.3 10.3L4.2 12.2" stroke="#36a5f6" stroke-width="0.6"/></svg><span style="left:22px">编辑</span></div>
<div class="bdel" style="left:1650px;top:464px"><svg class="ico" style="left:7px;top:5px" width="11" height="12" viewBox="0 0 11 12"><path d="M0.5 2.5H10.5M3.5 2.5V1H7.5V2.5" fill="none" stroke="#fff" stroke-width="1.4"/><path d="M1.6 3.5H9.4L8.7 11.5H2.3Z" fill="#fff"/><path d="M4 5V10M5.5 5V10M7 5V10" stroke="#f5692f" stroke-width="0.7"/></svg><span style="left:23px">删除</span></div>
<div class="td" style="left:921px;top:495px;width:169px;height:40px;line-height:42px">财务</div>
<div class="td" style="left:1090px;top:495px;width:168px;height:40px;line-height:42px">5</div>
<div class="td" style="left:1258px;top:495px;width:210px;height:40px;line-height:42px">6</div>
<div class="bed" style="left:1589px;top:504px"><svg class="ico" style="left:4px;top:4px" width="15" height="14" viewBox="0 0 15 14"><path d="M1 13.3L1.6 10.6L10.6 1.6A1.5 1.5 0 0 1 12.9 3.9L3.9 12.9Z" fill="#fff"/><path d="M2.3 10.3L4.2 12.2" stroke="#36a5f6" stroke-width="0.6"/></svg><span style="left:22px">编辑</span></div>
<div class="bdel" style="left:1650px;top:504px"><svg class="ico" style="left:7px;top:5px" width="11" height="12" viewBox="0 0 11 12"><path d="M0.5 2.5H10.5M3.5 2.5V1H7.5V2.5" fill="none" stroke="#fff" stroke-width="1.4"/><path d="M1.6 3.5H9.4L8.7 11.5H2.3Z" fill="#fff"/><path d="M4 5V10M5.5 5V10M7 5V10" stroke="#f5692f" stroke-width="0.7"/></svg><span style="left:23px">删除</span></div>
<div class="td" style="left:921px;top:535px;width:169px;height:40px;line-height:42px">人事</div>
<div class="td" style="left:1090px;top:535px;width:168px;height:40px;line-height:42px">6</div>
<div class="td" style="left:1258px;top:535px;width:210px;height:40px;line-height:42px">7</div>
<div class="bed" style="left:1589px;top:544px"><svg class="ico" style="left:4px;top:4px" width="15" height="14" viewBox="0 0 15 14"><path d="M1 13.3L1.6 10.6L10.6 1.6A1.5 1.5 0 0 1 12.9 3.9L3.9 12.9Z" fill="#fff"/><path d="M2.3 10.3L4.2 12.2" stroke="#36a5f6" stroke-width="0.6"/></svg><span style="left:22px">编辑</span></div>
<div class="bdel" style="left:1650px;top:544px"><svg class="ico" style="left:7px;top:5px" width="11" height="12" viewBox="0 0 11 12"><path d="M0.5 2.5H10.5M3.5 2.5V1H7.5V2.5" fill="none" stroke="#fff" stroke-width="1.4"/><path d="M1.6 3.5H9.4L8.7 11.5H2.3Z" fill="#fff"/><path d="M4 5V10M5.5 5V10M7 5V10" stroke="#f5692f" stroke-width="0.7"/></svg><span style="left:23px">删除</span></div>
<div class="td" style="left:921px;top:575px;width:169px;height:39px;line-height:41px">审核</div>
<div class="td" style="left:1090px;top:575px;width:168px;height:39px;line-height:41px">7</div>
<div class="td" style="left:1258px;top:575px;width:210px;height:39px;line-height:41px">8</div>
<div class="bed" style="left:1589px;top:584px"><svg class="ico" style="left:4px;top:4px" width="15" height="14" viewBox="0 0 15 14"><path d="M1 13.3L1.6 10.6L10.6 1.6A1.5 1.5 0 0 1 12.9 3.9L3.9 12.9Z" fill="#fff"/><path d="M2.3 10.3L4.2 12.2" stroke="#36a5f6" stroke-width="0.6"/></svg><span style="left:22px">编辑</span></div>
<div class="bdel" style="left:1650px;top:584px"><svg class="ico" style="left:7px;top:5px" width="11" height="12" viewBox="0 0 11 12"><path d="M0.5 2.5H10.5M3.5 2.5V1H7.5V2.5" fill="none" stroke="#fff" stroke-width="1.4"/><path d="M1.6 3.5H9.4L8.7 11.5H2.3Z" fill="#fff"/><path d="M4 5V10M5.5 5V10M7 5V10" stroke="#f5692f" stroke-width="0.7"/></svg><span style="left:23px">删除</span></div>
<div class="td" style="left:921px;top:614px;width:169px;height:40px;line-height:42px">办公</div>
<div class="td" style="left:1090px;top:614px;width:168px;height:40px;line-height:42px">8</div>
<div class="td" style="left:1258px;top:614px;width:210px;height:40px;line-height:42px">9</div>
<div class="bed" style="left:1589px;top:624px"><svg class="ico" style="left:4px;top:4px" width="15" height="14" viewBox="0 0 15 14"><path d="M1 13.3L1.6 10.6L10.6 1.6A1.5 1.5 0 0 1 12.9 3.9L3.9 12.9Z" fill="#fff"/><path d="M2.3 10.3L4.2 12.2" stroke="#36a5f6" stroke-width="0.6"/></svg><span style="left:22px">编辑</span></div>
<div class="bdel" style="left:1650px;top:624px"><svg class="ico" style="left:7px;top:5px" width="11" height="12" viewBox="0 0 11 12"><path d="M0.5 2.5H10.5M3.5 2.5V1H7.5V2.5" fill="none" stroke="#fff" stroke-width="1.4"/><path d="M1.6 3.5H9.4L8.7 11.5H2.3Z" fill="#fff"/><path d="M4 5V10M5.5 5V10M7 5V10" stroke="#f5692f" stroke-width="0.7"/></svg><span style="left:23px">删除</span></div>
<div class="td" style="left:921px;top:654px;width:169px;height:40px;line-height:42px">考勤</div>
<div class="td" style="left:1090px;top:654px;width:168px;height:40px;line-height:42px">9</div>
<div class="td" style="left:1258px;top:654px;width:210px;height:40px;line-height:42px">10</div>
<div class="bed" style="left:1589px;top:664px"><svg class="ico" style="left:4px;top:4px" width="15" height="14" viewBox="0 0 15 14"><path d="M1 13.3L1.6 10.6L10.6 1.6A1.5 1.5 0 0 1 12.9 3.9L3.9 12.9Z" fill="#fff"/><path d="M2.3 10.3L4.2 12.2" stroke="#36a5f6" stroke-width="0.6"/></svg><span style="left:22px">编辑</span></div>
<div class="bdel" style="left:1650px;top:664px"><svg class="ico" style="left:7px;top:5px" width="11" height="12" viewBox="0 0 11 12"><path d="M0.5 2.5H10.5M3.5 2.5V1H7.5V2.5" fill="none" stroke="#fff" stroke-width="1.4"/><path d="M1.6 3.5H9.4L8.7 11.5H2.3Z" fill="#fff"/><path d="M4 5V10M5.5 5V10M7 5V10" stroke="#f5692f" stroke-width="0.7"/></svg><span style="left:23px">删除</span></div>
<div class="td" style="left:921px;top:694px;width:169px;height:39px;line-height:41px">系统</div>
<div class="td" style="left:1090px;top:694px;width:168px;height:39px;line-height:41px">10</div>
<div class="td" style="left:1258px;top:694px;width:210px;height:39px;line-height:41px">11</div>
<div class="bed" style="left:1589px;top:703px"><svg class="ico" style="left:4px;top:4px" width="15" height="14" viewBox="0 0 15 14"><path d="M1 13.3L1.6 10.6L10.6 1.6A1.5 1.5 0 0 1 12.9 3.9L3.9 12.9Z" fill="#fff"/><path d="M2.3 10.3L4.2 12.2" stroke="#36a5f6" stroke-width="0.6"/></svg><span style="left:22px">编辑</span></div>
<div class="bdel" style="left:1650px;top:703px"><svg class="ico" style="left:7px;top:5px" width="11" height="12" viewBox="0 0 11 12"><path d="M0.5 2.5H10.5M3.5 2.5V1H7.5V2.5" fill="none" stroke="#fff" stroke-width="1.4"/><path d="M1.6 3.5H9.4L8.7 11.5H2.3Z" fill="#fff"/><path d="M4 5V10M5.5 5V10M7 5V10" stroke="#f5692f" stroke-width="0.7"/></svg><span style="left:23px">删除</span></div>
<div style="position:absolute;left:394px;top:904px;width:401px;height:30px;border:1px solid #e6e6e6;border-radius:3px;background:#fff"></div>
<div class="pg" style="left:395px;top:905px;width:122px">129 条记录 1/9 页</div>
<div class="vl" style="left:517px;top:905px;height:28px;background:#e8e8e8"></div>
<div class="pg" style="left:517px;top:905px;width:21px">1</div>
<div class="vl" style="left:538px;top:905px;height:28px;background:#e8e8e8"></div>
<div class="pg" style="left:538px;top:905px;width:21px">2</div>
<div class="vl" style="left:559px;top:905px;height:28px;background:#e8e8e8"></div>
<div class="pg" style="left:559px;top:905px;width:21px">3</div>
<div class="vl" style="left:580px;top:905px;height:28px;background:#e8e8e8"></div>
<div class="pg" style="left:580px;top:905px;width:21px">4</div>
<div class="vl" style="left:601px;top:905px;height:28px;background:#e8e8e8"></div>
<div class="pg" style="left:601px;top:905px;width:21px">5</div>
<div class="vl" style="left:622px;top:905px;height:28px;background:#e8e8e8"></div>
<div class="pg" style="left:622px;top:905px;width:54px">下一页</div>
<div class="vl" style="left:676px;top:905px;height:28px;background:#e8e8e8"></div>
<div class="pg" style="left:676px;top:905px;width:50px">下5页</div>
<div class="vl" style="left:726px;top:905px;height:28px;background:#e8e8e8"></div>
<div class="pg" style="left:726px;top:905px;width:68px">最后一页</div>
</div><!--/MAIN-->
<div id="footer">2023 © http://www.kaidandashi.com/ 房哨多中介管理运营平台</div>
<div id="sb"></div><div id="sbt"></div>
</body></html>
